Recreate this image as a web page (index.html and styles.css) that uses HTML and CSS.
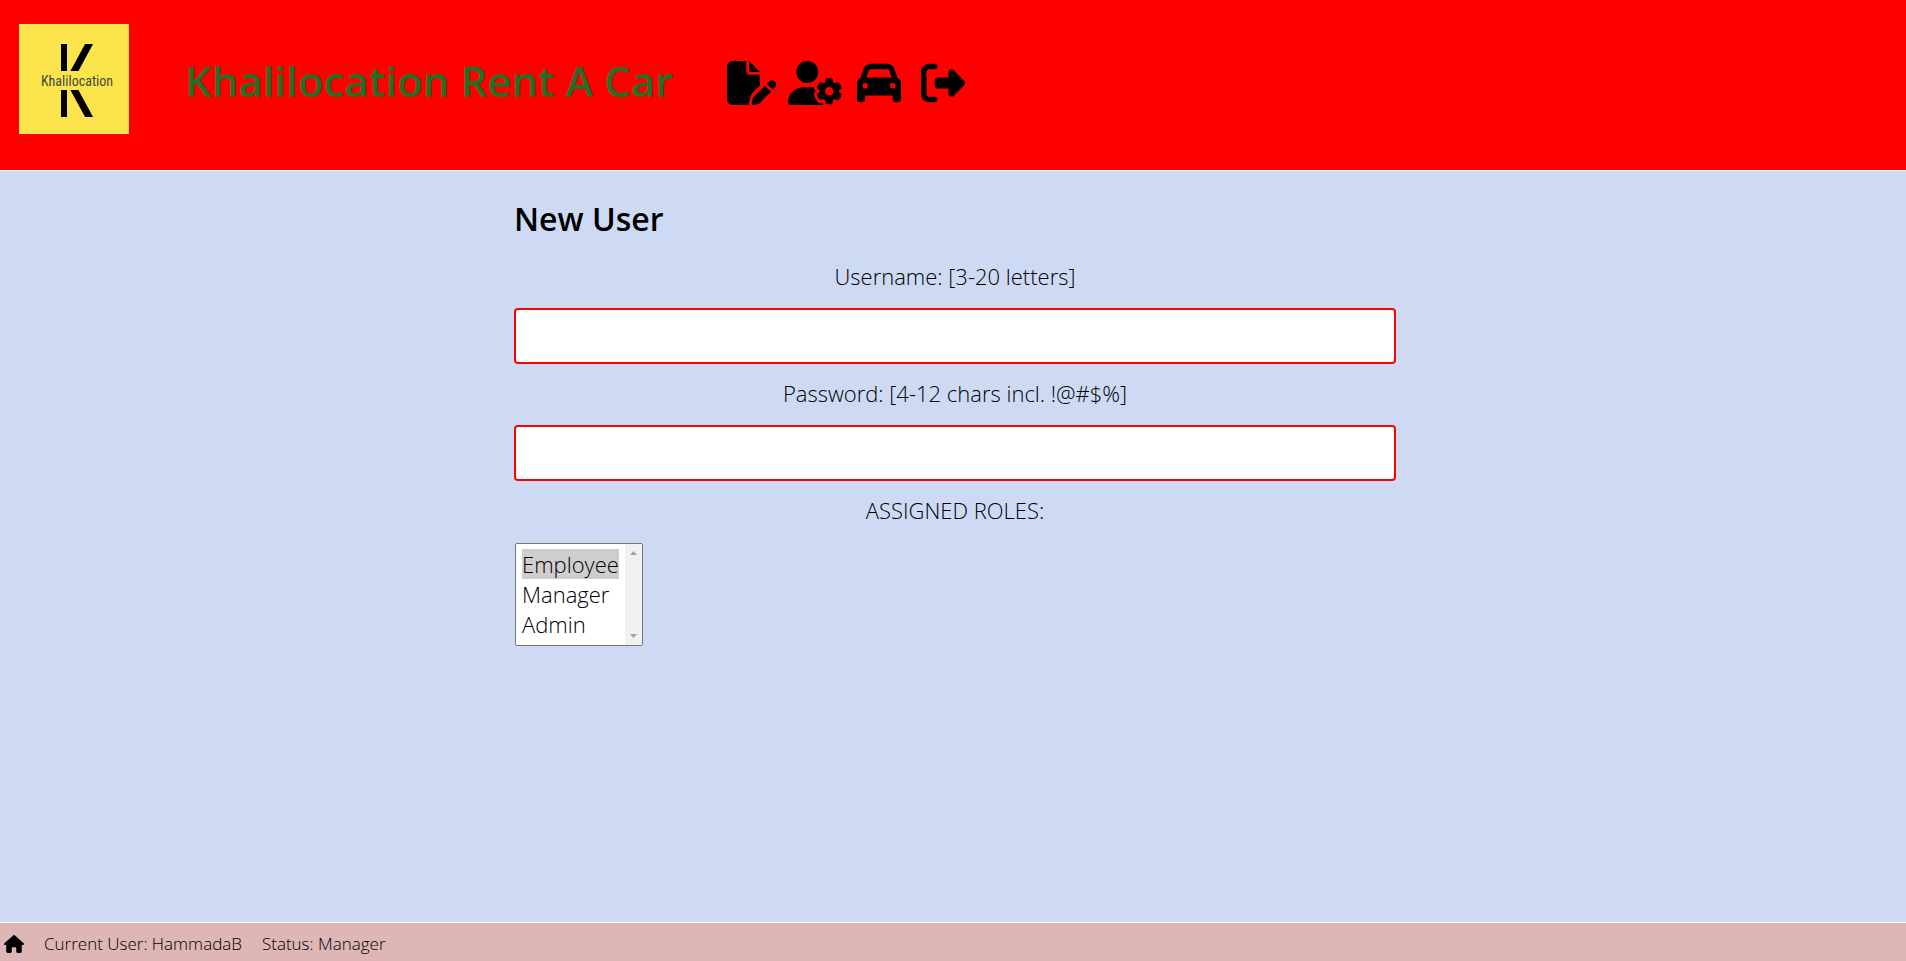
FILE: index.html
```html
<!DOCTYPE html>
<html lang="en">
<head>
<meta charset="utf-8">
<title>Khalilocation Rent A Car</title>
<link rel="stylesheet" href="styles.css">
</head>
<body>
<header class="header">
  <a class="logo" href="#" aria-label="Khalilocation">
    <svg class="logo-mark" viewBox="0 0 110 110" aria-hidden="true">
      <defs>
        <clipPath id="mark-clip"><path d="M0 20H110V47H0zM0 66H110V93H0z"/></clipPath>
      </defs>
      <g clip-path="url(#mark-clip)" stroke="#000" fill="none">
        <path stroke-width="6" d="M45 10V100"/>
        <path stroke-width="7" d="M75.500 10L50 57M50 56L75.500 103"/>
      </g>
    </svg>
    <span class="logo-name">Khalilocation</span>
  </a>
  <h1 class="title"><a href="#">Khalilocation Rent A Car</a></h1>
  <nav class="nav">
    <button class="icon-button" type="button" title="Notes">
      <svg class="icon" viewBox="0 0 576 512"><path d="M0 64C0 28.700 28.700 0 64 0H224V128c0 17.700 14.300 32 32 32H384V285.700l-86.800 86.800c-10.300 10.300-17.500 23.100-21 37.200l-18.700 74.900c-2.300 9.200-1.800 18.800 1.300 27.500H64c-35.300 0-64-28.700-64-64V64zm384 64H256V0L384 128zM549.800 235.700l14.400 14.400c15.600 15.600 15.600 40.900 0 56.600l-29.400 29.400-71-71 29.400-29.400c15.600-15.600 40.900-15.600 56.600 0zM311.900 417L441.100 287.800l71 71L382.900 487.900c-4.100 4.100-9.200 7-14.900 8.400l-60.100 15c-5.500 1.400-11.200-.2-15.200-4.200s-5.600-9.700-4.200-15.200l15-60.100c1.400-5.600 4.300-10.800 8.400-14.900z"/></svg>
    </button>
    <button class="icon-button" type="button" title="Users">
      <svg class="icon" viewBox="0 0 640 512"><path d="M224 0a128 128 0 1 1 0 256A128 128 0 1 1 224 0zM178.300 304h91.400c11.800 0 23.400 1.200 34.500 3.300c-2.100 18.500 7.400 35.600 21.800 44.800c-16.600 10.600-26.700 31.600-20 53.300c4 12.900 9.400 25.500 16.400 37.600s15.200 23.100 24.400 33c15.700 16.900 39.600 18.400 57.200 8.700v.9c0 9.200 2.700 18.500 7.900 26.300H29.700C13.300 512 0 498.700 0 482.300C0 383.800 79.800 304 178.300 304zM436 218.200c0-7 4.500-13.300 11.300-14.800c10.500-2.400 21.500-3.700 32.700-3.700s22.200 1.300 32.700 3.700c6.800 1.500 11.300 7.800 11.300 14.800v17.700c0 7.800 4.800 14.800 11.600 18.700c6.800 3.900 15.100 4.500 21.800 .6l13.800-7.900c6.100-3.500 13.700-2.700 18.500 2.400c7.600 8.100 14.300 17.200 20.100 27.200s10.300 20.400 13.500 31c2.100 6.700-1.100 13.700-7.200 17.200l-14.400 8.300c-6.500 3.700-10 10.900-10 18.400s3.500 14.700 10 18.400l14.400 8.300c6.100 3.500 9.200 10.500 7.200 17.200c-3.300 10.600-7.800 21-13.500 31s-12.500 19.100-20.100 27.200c-4.800 5.100-12.500 5.900-18.500 2.400l-13.800-7.900c-6.700-3.900-15.100-3.300-21.800 .6c-6.800 3.900-11.600 10.900-11.600 18.700v17.700c0 7-4.500 13.300-11.300 14.800c-10.500 2.400-21.500 3.700-32.700 3.700s-22.200-1.300-32.700-3.700c-6.800-1.500-11.300-7.800-11.300-14.800V467.800c0-7.900-4.900-14.900-11.700-18.900c-6.800-3.900-15.200-4.500-22-.6l-13.500 7.800c-6.100 3.500-13.700 2.700-18.500-2.400c-7.600-8.100-14.300-17.200-20.100-27.200s-10.300-20.400-13.500-31c-2.100-6.700 1.100-13.700 7.200-17.200l14-8.100c6.500-3.800 10.100-11.100 10.100-18.600s-3.500-14.800-10.100-18.600l-14-8.100c-6.100-3.500-9.200-10.500-7.200-17.200c3.300-10.600 7.700-21 13.500-31s12.500-19.100 20.100-27.200c4.800-5.100 12.400-5.900 18.500-2.400l13.600 7.800c6.800 3.900 15.200 3.300 22-.6c6.900-3.900 11.700-11 11.700-18.900V218.200zm92.100 133.500a48.100 48.100 0 1 0 -96.100 0 48.100 48.100 0 1 0 96.100 0z"/></svg>
    </button>
    <button class="icon-button" type="button" title="Cars">
      <svg class="icon" viewBox="0 0 512 512"><path d="M135.200 117.400L109.100 192H402.900l-26.100-74.600C372.300 104.600 360.200 96 346.600 96H165.400c-13.600 0-25.700 8.600-30.200 21.400zM39.600 196.800L74.800 96.300C88.300 57.800 124.600 32 165.400 32H346.600c40.800 0 77.100 25.800 90.600 64.300l35.200 100.500c23.200 9.600 39.600 32.500 39.600 59.200V400v48c0 17.700-14.300 32-32 32H448c-17.700 0-32-14.300-32-32V400H96v48c0 17.700-14.300 32-32 32H32c-17.700 0-32-14.300-32-32V400 256c0-26.700 16.400-49.600 39.600-59.200zM128 288a32 32 0 1 0 -64 0 32 32 0 1 0 64 0zm288 32a32 32 0 1 0 0-64 32 32 0 1 0 0 64z"/></svg>
    </button>
    <button class="icon-button" type="button" title="Logout">
      <svg class="icon" viewBox="0 0 512 512"><path d="M377.900 105.900L500.700 228.700c7.200 7.200 11.300 17.100 11.300 27.300s-4.100 20.100-11.300 27.300L377.900 406.100c-6.400 6.400-15 9.900-24 9.900c-18.700 0-33.900-15.200-33.900-33.900l0-62.100-128 0c-17.700 0-32-14.300-32-32l0-64c0-17.700 14.300-32 32-32l128 0 0-62.100c0-18.700 15.200-33.900 33.900-33.900c9 0 17.600 3.600 24 9.900zM160 96L96 96c-17.700 0-32 14.300-32 32l0 256c0 17.700 14.300 32 32 32l64 0c17.700 0 32 14.300 32 32s-14.300 32-32 32l-64 0c-53 0-96-43-96-96L0 128C0 75 43 32 96 32l64 0c17.700 0 32 14.300 32 32s-14.300 32-32 32z"/></svg>
    </button>
  </nav>
</header>
<main class="main">
  <form class="form">
    <h2 class="form-title">New User</h2>
    <label class="label" for="username">Username: [3-20 letters]</label>
    <input class="input" id="username" name="username" type="text" autocomplete="off">
    <label class="label" for="password">Password: [4-12 chars incl. !@#$%]</label>
    <input class="input" id="password" name="password" type="password">
    <label class="label" for="roles">ASSIGNED ROLES:</label>
    <div class="select-box">
      <select class="select" id="roles" name="roles" multiple size="3">
        <option selected>Employee</option>
        <option>Manager</option>
        <option>Admin</option>
      </select>
      <div class="scrollbar" aria-hidden="true">
        <svg class="arrow" viewBox="0 0 7 4"><path d="M0 4L3.500 0L7 4z"/></svg>
        <svg class="arrow" viewBox="0 0 7 4"><path d="M0 0L3.500 4L7 0z"/></svg>
      </div>
    </div>
  </form>
</main>
<footer class="footer">
  <button class="home-button" type="button" title="Home">
    <svg class="home-icon" viewBox="0 0 576 512"><path d="M575.800 255.500c0 18-15 32.100-32 32.100h-32l.7 160.200c0 2.700-.2 5.400-.5 8.100V472c0 22.100-17.900 40-40 40H456c-1.100 0-2.200 0-3.300-.1c-1.400 .1-2.800 .1-4.200 .1H416 392c-22.100 0-40-17.900-40-40V448 384c0-17.700-14.300-32-32-32H256c-17.700 0-32 14.300-32 32v64 24c0 22.100-17.900 40-40 40H160 128.100c-1.500 0-3-.1-4.500-.2c-1.200 .1-2.400 .2-3.600 .2H104c-22.100 0-40-17.900-40-40V360c0-.9 0-1.900 .1-2.800V287.600H32c-18 0-32-14-32-32.100c0-9 3-17 10-24L266.400 8c7-7 15-8 22-8s15 2 21 7L564.800 231.500c8 7 12 15 11 24z"/></svg>
  </button>
  <p>Current User: HammadaB</p>
  <p>Status: Manager</p>
</footer>
</body>
</html>
```
FILE: styles.css
```css
* {
  box-sizing: border-box;
  margin: 0;
  padding: 0;
}

body {
  min-height: 100vh;
  display: flex;
  flex-direction: column;
  background: #cedaf4;
  color: #000;
  font: 300 22px/30px "Open Sans", "Noto Sans", sans-serif;
}

input,
button,
select,
option {
  font: inherit;
  color: inherit;
}

.header {
  display: flex;
  align-items: flex-start;
  padding: 24px 19px 36px;
  background: #f00;
  border-bottom: 1px solid #fff;
}

.logo {
  display: grid;
  place-items: center;
  width: 110px;
  height: 110px;
  background: #fce44d;
  color: #454a3c;
  text-decoration: none;
}

.logo-mark,
.logo-name {
  grid-area: 1 / 1;
}

.logo-mark {
  width: 100%;
}

.logo-name {
  padding: 4px 0 0 6px;
  font: 400 14px/20px "Liberation Sans Narrow", "Roboto Condensed", sans-serif;
}

.title {
  margin-left: 56px;
  padding-top: 27px;
  font-size: 42px;
  line-height: 60px;
  font-weight: 600;
}

.title a {
  color: #266e26;
  text-decoration: none;
}

.nav {
  display: flex;
  margin-left: 46px;
  padding-top: 35px;
}

.icon-button {
  display: flex;
  justify-content: center;
  align-items: center;
  width: 64px;
  height: 48px;
  background: none;
  border: 0;
}

.icon {
  height: 44px;
}

.main {
  flex: 1;
  padding: 26px 16px 26px 20px;
}

.form {
  display: flex;
  flex-direction: column;
  max-width: 882px;
  margin: 0 auto;
}

.form-title {
  margin-bottom: 20px;
  font-size: 32px;
  line-height: 44px;
  font-weight: 600;
}

.label {
  text-align: center;
  margin-bottom: 17px;
}

.input {
  height: 56px;
  padding: 12px;
  margin-bottom: 14px;
  background: #fff;
  border: 2px solid #f00;
  border-radius: 4px;
  outline: 0;
}

.select-box {
  position: relative;
  align-self: flex-start;
  display: flex;
  margin: 1px 0 0 1px;
}

.select {
  width: 128px;
  height: 103px;
  padding: 5px 23px 5px 6px;
  overflow: hidden;
  background: #fff;
  border: 1px solid #767676;
  border-radius: 2px;
}

.select option {
  padding: 0;
  line-height: 30px;
}

.select option:checked {
  background: #cecece;
}

.scrollbar {
  position: absolute;
  top: 1px;
  right: 1px;
  bottom: 1px;
  width: 17px;
  padding: 7px 5px;
  display: flex;
  flex-direction: column;
  justify-content: space-between;
  background: #f1f1f1;
  pointer-events: none;
}

.arrow {
  width: 7px;
  height: 4px;
  fill: #a3a3a3;
}

.footer {
  display: flex;
  align-items: center;
  gap: 20px;
  padding: 6px 4px 2px;
  background: #ddb6b5;
  border-top: 1px solid #fff;
  font-size: 17px;
}

.home-button {
  display: flex;
  background: none;
  border: 0;
}

.home-icon {
  width: 20px;
  height: 18px;
}
```
